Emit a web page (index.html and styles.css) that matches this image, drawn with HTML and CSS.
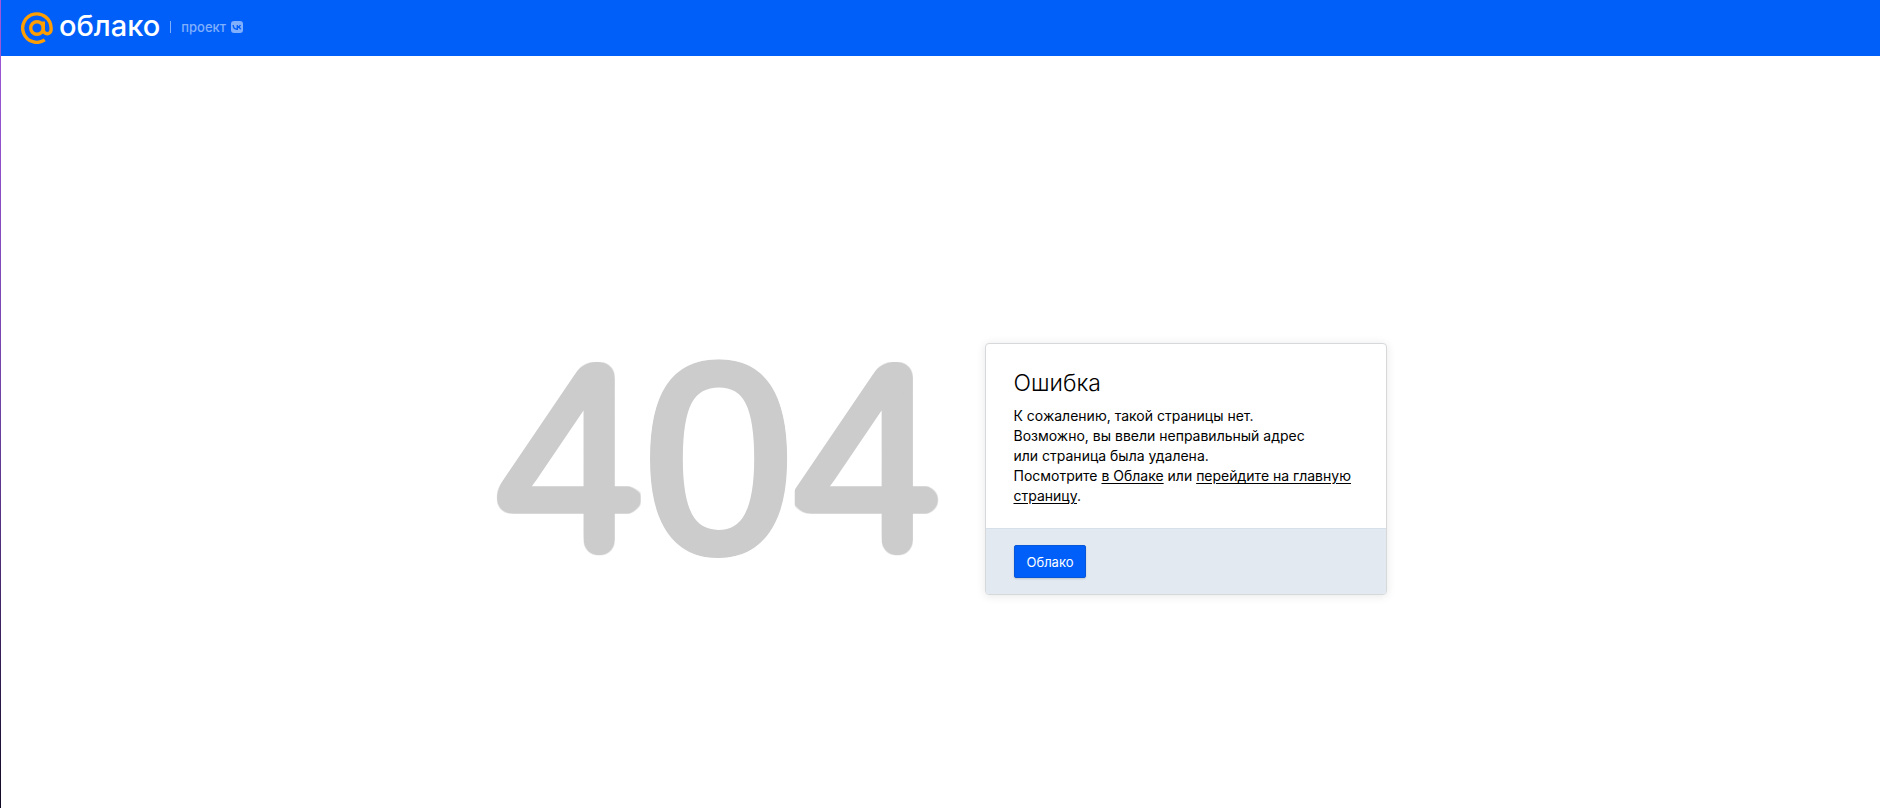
FILE: index.html
```html
<!doctype html>
<html lang="ru">
<head>
<meta charset="utf-8">
<meta name="viewport" content="width=device-width, initial-scale=1">
<title>Ошибка 404 — Облако</title>
<link rel="stylesheet" href="styles.css">
</head>
<body>
<header class="header">
<a class="logo" href="/">
<svg class="logo-at" viewBox="0 0 32 32" aria-hidden="true">
<circle cx="16" cy="16" r="6.3"/>
<path d="M22.300 9.500v8.300a3.900 3.900 0 0 0 7.800 0V16A14.200 14.200 0 1 0 23.800 27.900"/>
</svg>
<span class="logo-name">облако</span>
</a>
<a class="project" href="/vk">
<span>проект</span>
<svg class="project-vk" viewBox="0 0 12 12" role="img" aria-label="VK">
<rect width="12" height="12" rx="3"/>
<path d="M2.200 4c.1 2.600 1.500 4.200 3.800 4.200h.3V4M9.500 4C9 5.300 7.900 6 6.300 6c1.700 0 2.900.8 3.500 2.200"/>
</svg>
</a>
</header>

<main class="page">
<svg class="code" viewBox="0 0 460 340" role="img" aria-label="404">
<defs>
<filter id="round" x="-5%" y="0" width="110%" height="100%">
<feGaussianBlur stdDeviation="9"/>
<feComponentTransfer result="soft"><feFuncA type="linear" slope="16" intercept="-7"/></feComponentTransfer>
<feComposite in="SourceGraphic" in2="soft" operator="in"/>
</filter>
</defs>
<text x="0" y="252" filter="url(#round)">404</text>
</svg>

<section class="card">
<div class="card-body">
<h1>Ошибка</h1>
<p>К сожалению, такой страницы нет.<br>
Возможно, вы ввели неправильный адрес<br>
или страница была удалена.<br>
Посмотрите <a href="/home">в Облаке</a> или <a href="/">перейдите на главную страницу</a>.</p>
</div>
<div class="card-footer">
<button class="btn" type="button">Облако</button>
</div>
</section>
</main>
</body>
</html>
```
FILE: styles.css
```css
* { box-sizing: border-box; }
html, body { margin: 0; padding: 0; }
body { display: flex; flex-direction: column; min-height: 100vh; padding-left: 1px; background: linear-gradient(#a259dc, #6f42a8 50%, #120a24) left / 1px 100% no-repeat #fff; font-family: Inter, "Liberation Sans", sans-serif; color: #000; }

.header { display: flex; align-items: center; height: 56px; padding: 0 20px; background: #005ff9; }
.header a { text-decoration: none; }
.logo { display: flex; align-items: center; gap: 6px; color: #fff; }
.logo-at { width: 32px; height: 32px; fill: none; stroke: #ff9e00; stroke-width: 3.4; stroke-linecap: butt; }
.logo-name { font-size: 29px; font-weight: 500; line-height: 32px; padding-bottom: 4px; }
.project { display: flex; align-items: center; gap: 5px; height: 12px; margin: 0 0 2px 10px; padding-left: 10px; border-left: 1px solid #80affc; font-size: 13px; font-weight: 500; color: #80affc; }
.project-vk { width: 12px; height: 12px; fill: #80affc; }
.project-vk path { fill: none; stroke: #005ff9; stroke-width: 1.4; }

.page { display: flex; flex: 1; align-items: center; justify-content: center; gap: 30px; padding: 74px 20px 0; }
.code { width: 460px; height: 340px; }
.code text { font: 268px "Liberation Sans", Arial, sans-serif; fill: #ccc; stroke: #ccc; stroke-width: 9px; stroke-linejoin: round; }

.card { width: 402px; border: 1px solid #d6d8da; border-radius: 4px; background: #fff; box-shadow: 0 1px 10px rgba(0, 0, 0, 0.1); overflow: hidden; }
.card-body { padding: 24px 28px 22px; }
h1 { margin: 0 0 8px; font-size: 23px; font-weight: 300; line-height: 30px; }
p { margin: 0; font-size: 14px; font-weight: 400; line-height: 20px; }
p a { color: #000; text-underline-offset: 2px; }
.card-footer { padding: 16px 28px; border-top: 1px solid #d6e0e9; background: #e2e9f0; }
.btn { display: block; height: 33px; padding: 0 12px; border: 1px solid #0857d8; border-radius: 2px; background: #005ff9; color: #fff; font: 400 13px Inter, "Liberation Sans", sans-serif; box-shadow: 0 1px 2px rgba(0, 0, 0, 0.15); cursor: pointer; }
```
